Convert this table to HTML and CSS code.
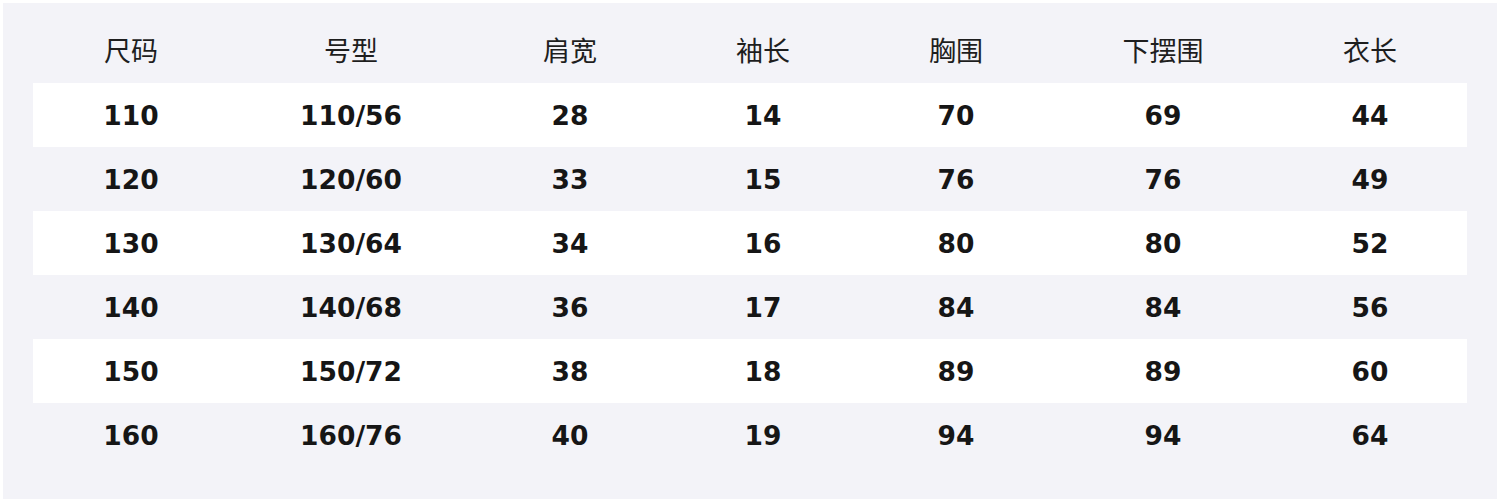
FILE: index.html
```html
<!DOCTYPE html>
<html lang="zh">
<head>
<meta charset="utf-8">
<link rel="stylesheet" href="styles.css">
</head>
<body>
<div class="panel">
  <div class="table">
    <div class="row head">
      <div>尺码</div><div>号型</div><div>肩宽</div><div>袖长</div><div>胸围</div><div>下摆围</div><div>衣长</div>
    </div>
    <div class="row body alt">
      <div>110</div><div>110/56</div><div>28</div><div>14</div><div>70</div><div>69</div><div>44</div>
    </div>
    <div class="row body">
      <div>120</div><div>120/60</div><div>33</div><div>15</div><div>76</div><div>76</div><div>49</div>
    </div>
    <div class="row body alt">
      <div>130</div><div>130/64</div><div>34</div><div>16</div><div>80</div><div>80</div><div>52</div>
    </div>
    <div class="row body">
      <div>140</div><div>140/68</div><div>36</div><div>17</div><div>84</div><div>84</div><div>56</div>
    </div>
    <div class="row body alt">
      <div>150</div><div>150/72</div><div>38</div><div>18</div><div>89</div><div>89</div><div>60</div>
    </div>
    <div class="row body">
      <div>160</div><div>160/76</div><div>40</div><div>19</div><div>94</div><div>94</div><div>64</div>
    </div>
  </div>
</div>
</body>
</html>
```
FILE: styles.css
```css
html, body {
  margin: 0;
  padding: 0;
  background: #ffffff;
}
.panel {
  margin: 3px;
  width: 1494px;
  height: 496px;
  box-sizing: border-box;
  background: #f3f3f8;
  padding: 0 30px 32px 30px;
}
.table {
  display: flex;
  flex-direction: column;
}
.row {
  display: grid;
  grid-template-columns: 196px 244px 194px 192px 194px 220px 194px;
  align-items: center;
  text-align: center;
}
.row.head {
  height: 80px;
  font-family: "Noto Sans CJK SC", "Noto Sans", sans-serif;
  font-size: 27px;
  font-weight: 400;
  color: #1e1e1e;
  padding-top: 12px;
  box-sizing: border-box;
}
.row.body {
  height: 64px;
  font-family: "DejaVu Sans", sans-serif;
  font-weight: 700;
  font-size: 26.5px;
  color: #161616;
  padding-top: 1px;
  box-sizing: border-box;
}
.row.alt {
  background: #ffffff;
}
```
